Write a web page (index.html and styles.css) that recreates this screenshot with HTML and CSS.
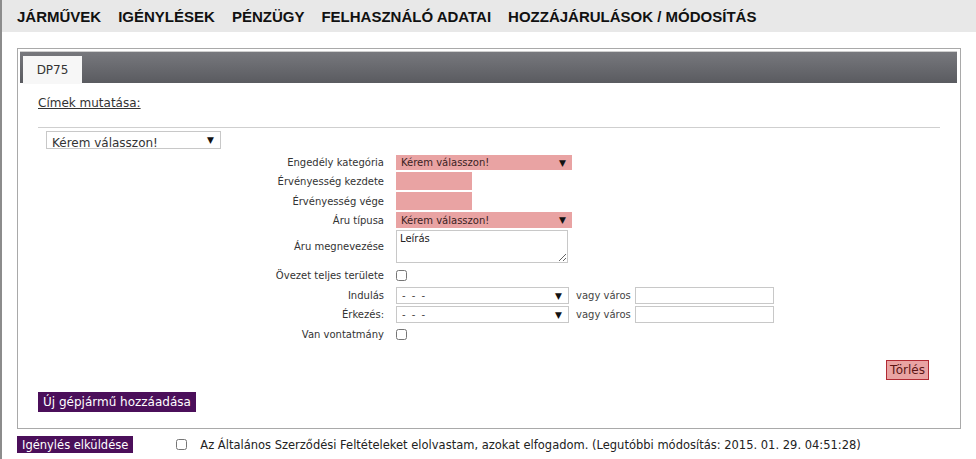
FILE: index.html
```html
<!DOCTYPE html>
<html lang="hu">
<head>
    <meta charset="UTF-8">
    <title>Igénylés - DP75</title>
    <link rel="stylesheet" href="styles.css">
</head>
<body>
    <div class="page">
        <nav class="topnav">
            <a href="#">JÁRMŰVEK</a>
            <a href="#">IGÉNYLÉSEK</a>
            <a href="#">PÉNZÜGY</a>
            <a href="#">FELHASZNÁLÓ ADATAI</a>
            <a href="#">HOZZÁJÁRULÁSOK / MÓDOSÍTÁS</a>
        </nav>

        <div class="panel">
            <div class="panel-head">
                <span class="tab">DP75</span>
            </div>
            <div class="panel-body">
                <a href="#" class="titles-link">Címek mutatása:</a>
                <hr class="sep">
                <div class="sel sel-main">
                    <select><option>Kérem válasszon!</option></select>
                </div>

                <div class="form-grid">
                    <label>Engedély kategória</label>
                    <div class="field"><div class="sel sel-pink sel-wide h15"><select><option>Kérem válasszon!</option></select></div></div>

                    <label>Érvényesség kezdete</label>
                    <div class="field"><input type="text" class="inp-pink"></div>

                    <label>Érvényesség vége</label>
                    <div class="field"><input type="text" class="inp-pink"></div>

                    <label>Áru típusa</label>
                    <div class="field"><div class="sel sel-pink sel-wide h16"><select><option>Kérem válasszon!</option></select></div></div>

                    <label>Áru megnevezése</label>
                    <div class="field"><textarea class="desc">Leírás</textarea></div>

                    <label>Övezet teljes területe</label>
                    <div class="field field-chk tall"><input type="checkbox" class="chk"></div>

                    <label>Indulás</label>
                    <div class="field">
                        <div class="sel sel-route"><select><option>- - -</option></select></div>
                        <span class="or-city">vagy város</span>
                        <input type="text" class="inp-city">
                    </div>

                    <label>Érkezés:</label>
                    <div class="field">
                        <div class="sel sel-route"><select><option>- - -</option></select></div>
                        <span class="or-city">vagy város</span>
                        <input type="text" class="inp-city">
                    </div>

                    <label>Van vontatmány</label>
                    <div class="field field-chk"><input type="checkbox" class="chk"></div>
                </div>

                <div class="actions">
                    <button class="btn-delete">Törlés</button>
                </div>
                <button class="btn-purple btn-add">Új gépjármű hozzáadása</button>
            </div>
        </div>

        <div class="submit-row">
            <button class="btn-purple btn-send">Igénylés elküldése</button>
            <input type="checkbox" class="chk">
            <span class="terms">Az Általános Szerződési Feltételeket elolvastam, azokat elfogadom. (Legutóbbi módosítás: 2015. 01. 29. 04:51:28)</span>
        </div>
    </div>
</body>
</html>
```

FILE: styles.css
```css
body {
    margin: 0;
    font-family: "DejaVu Sans", Verdana, sans-serif;
    color: #222;
    background: #fff;
}
.page {
    border-left: 2px solid #8c8c8c;
    min-height: 459px;
    box-sizing: border-box;
}
.topnav {
    display: flex;
    gap: 17px;
    height: 32px;
    align-items: center;
    padding-left: 15px;
    background-color: #e8e8e8;
    font-family: "Liberation Sans", Arial, sans-serif;
    font-weight: bold;
    font-size: 15px;
}
.topnav a {
    color: #111;
    text-decoration: none;
}
.panel {
    margin: 16px 15px 0 15px;
    border: 1px solid #a9a9a9;
}
.panel-head {
    margin: 2px 3px 0 2px;
    height: 32px;
    padding: 4px 0 0 3px;
    box-sizing: border-box;
    background: linear-gradient(#77787d, #5a5b60);
    border-top: 1px solid #cfcfcf;
}
.tab {
    display: inline-block;
    width: 59px;
    height: 28px;
    line-height: 28px;
    text-align: center;
    background: #f7f7f7;
    font-size: 12px;
    color: #333;
}
.panel-body {
    padding: 13px 20px 16px 20px;
}
.titles-link {
    display: block;
    font-size: 12px;
    line-height: 14px;
    color: #333;
}
.sep {
    margin: 17px 0 0 0;
    border: none;
    border-top: 1px solid #cfcfcf;
}
.sel {
    position: relative;
    box-sizing: border-box;
}
.sel select {
    appearance: none;
    -webkit-appearance: none;
    width: 100%;
    height: 100%;
    margin: 0;
    border: none;
    background: transparent;
    font-family: inherit;
    color: #222;
    padding: 0 0 0 5px;
    outline: none;
}
.sel::after {
    content: "▼";
    position: absolute;
    right: 6px;
    top: 50%;
    transform: translateY(-50%);
    font-size: 9px;
    color: #111;
    pointer-events: none;
}
.sel-main {
    margin: 3px 0 0 8px;
    width: 175px;
    height: 18px;
    border: 1px solid #c8c8c8;
}
.sel-main select {
    font-size: 12px;
    color: #333;
}
.form-grid {
    display: grid;
    grid-template-columns: 346px auto;
    column-gap: 12px;
    row-gap: 2px;
    margin-top: 6px;
    font-size: 10px;
}
.form-grid label {
    text-align: right;
    align-self: center;
    color: #333;
}
.field {
    display: flex;
    align-items: center;
    gap: 5px;
}
.field-chk { height: 18px; }
.field-chk.tall { height: 20px; }
.sel-pink {
    background: #e9a3a3;
}
.sel-pink select {
    font-size: 10px;
    color: #3a2222;
}
.sel-wide { width: 176px; }
.h15 { height: 15px; }
.h16 { height: 16px; }
.inp-pink {
    width: 76px;
    height: 18px;
    box-sizing: border-box;
    border: none;
    background: #e9a3a3;
    margin: 0;
}
.desc {
    width: 172px;
    height: 33px;
    box-sizing: border-box;
    margin: 0;
    border: 1px solid #c8c8c8;
    font-family: inherit;
    font-size: 10px;
    padding: 2px 3px;
    color: #222;
}
.chk {
    margin: 0;
    width: 11px;
    height: 11px;
}
.sel-route {
    width: 173px;
    height: 17px;
    border: 1px solid #c8c8c8;
}
.sel-route select {
    font-size: 10px;
    letter-spacing: 1.5px;
    color: #444;
}
.or-city {
    color: #444;
    margin-left: 2px;
}
.inp-city {
    width: 139px;
    height: 17px;
    box-sizing: border-box;
    margin: 0 0 0 -1px;
    border: 1px solid #c8c8c8;
}
.actions {
    display: flex;
    justify-content: flex-end;
    margin: 17px 11px 0 0;
}
.btn-delete {
    height: 20px;
    padding: 0 3px;
    background: #e9a3a3;
    border: 1px solid #b12a33;
    color: #5c1515;
    font-family: inherit;
    font-size: 12px;
}
.btn-purple {
    display: block;
    border: none;
    background: #4b0f5a;
    color: #fff;
    font-family: inherit;
    padding: 0 5px;
    cursor: pointer;
}
.btn-add {
    margin-top: 12px;
    height: 20px;
    font-size: 12px;
}
.submit-row {
    display: flex;
    align-items: center;
    margin: 7px 0 0 15px;
    font-size: 11.5px;
}
.btn-send {
    height: 17px;
    font-size: 11.5px;
    margin-right: 43px;
}
.submit-row .chk {
    margin-right: 13px;
}
.terms {
    color: #222;
}
```
